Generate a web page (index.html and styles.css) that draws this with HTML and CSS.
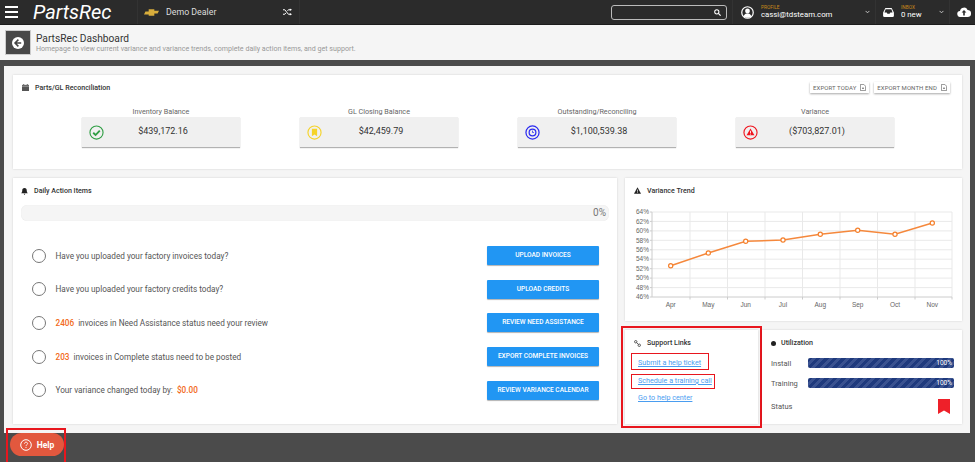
FILE: index.html
```html
<!DOCTYPE html>
<html lang="en">
<head>
  <meta charset="UTF-8">
  <meta name="viewport" content="width=device-width, initial-scale=1.0">
  <title>PartsRec Dashboard</title>
  <link rel="stylesheet" href="styles.css">
</head>
<body>

  <!-- Top bar -->
  <header class="topbar">
    <div class="burger"><span></span><span></span><span></span></div>
    <div class="logo">PartsRec</div>
    <div class="dealer">
      <svg class="bowtie" viewBox="0 0 16 7"><polygon points="5,0 11,0 11,1.5 16,1.5 14.5,4.5 11,4.5 11,7 5,7 5,5.5 0,5.5 1.5,2.5 5,2.5" fill="#d8ad3c"/></svg>
      <span class="dealer-name">Demo Dealer</span>
      <svg class="shuffle" viewBox="0 0 10 8"><path d="M0 1.5h2l4 5h2M0 6.5h2l1.2-1.5M5 2.7l1-1.2h2" fill="none" stroke="#fff" stroke-width="1.1"/><path d="M7.6 0l2.4 1.5-2.4 1.5zM7.6 5l2.4 1.5-2.4 1.5z" fill="#fff"/></svg>
    </div>
    <div class="search">
      <svg class="search-icon" viewBox="0 0 8 8"><circle cx="3.2" cy="3.2" r="2.4" fill="none" stroke="#fff" stroke-width="1.2"/><path d="M5 5l2.6 2.6" stroke="#fff" stroke-width="1.4"/></svg>
    </div>
    <div class="top-item profile">
      <svg class="top-icon" viewBox="0 0 14 14"><circle cx="7" cy="7" r="6.2" fill="none" stroke="#fff" stroke-width="1.3"/><circle cx="7" cy="5.4" r="2.6" fill="#fff"/><path d="M2.8 11.2c.8-2.4 2.4-3 4.2-3s3.4.6 4.2 3c-2.2 2-6.2 2-8.4 0z" fill="#fff"/></svg>
      <div class="top-text">
        <small>PROFILE</small>
        <span>cassi@tdsteam.com</span>
      </div>
      <svg class="chev" viewBox="0 0 6 4"><path d="M.7.7L3 3l2.3-2.3" fill="none" stroke="#ddd" stroke-width="1"/></svg>
    </div>
    <div class="top-item inbox">
      <svg class="top-icon inbox-icon" viewBox="0 0 12 10"><path d="M2.5 0h7L12 5v3.5A1.5 1.5 0 0 1 10.5 10h-9A1.5 1.5 0 0 1 0 8.5V5z" fill="#fff"/><path d="M2.8 1.3h6.4L10.5 5H8L7.2 6.5H4.8L4 5H1.5z" fill="#2b2b2b"/></svg>
      <div class="top-text">
        <small>INBOX</small>
        <span>0 new</span>
      </div>
      <svg class="chev" viewBox="0 0 6 4"><path d="M.7.7L3 3l2.3-2.3" fill="none" stroke="#ddd" stroke-width="1"/></svg>
    </div>
    <div class="upload">
      <svg viewBox="0 0 14 10"><path d="M3.5 10A3 3 0 0 1 3 4a4 4 0 0 1 7.6-1A3.5 3.5 0 0 1 10.5 10z" fill="#fff"/><path d="M7 3L4.6 5.6h1.6V8.500h1.600V5.600h1.600z" fill="#2b2b2b"/></svg>
    </div>
  </header>

  <!-- Page title -->
  <section class="pagehead">
    <div class="back">
      <svg viewBox="0 0 12 12"><circle cx="6" cy="6" r="6" fill="#fff"/><path d="M6.4 2.6L3 6l3.4 3.4M3.3 6h5.900" fill="none" stroke="#444" stroke-width="1.5"/></svg>
    </div>
    <div>
      <h1>PartsRec Dashboard</h1>
      <p>Homepage to view current variance and variance trends, complete daily action items, and get support.</p>
    </div>
  </section>

  <main class="panel">

    <!-- Reconciliation -->
    <section class="card recon">
      <div class="recon-head">
        <h2 class="card-title">
          <svg class="title-icon" viewBox="0 0 8 8"><path d="M0 1h8v7H0z" fill="#555"/><path d="M1.5 0h1v2h-1zM5.5 0h1v2h-1z" fill="#555"/><path d="M0 2.5h8" stroke="#fff" stroke-width=".5"/></svg>
          Parts/GL Reconciliation
        </h2>
        <div class="exports">
          <span class="export">EXPORT TODAY <svg viewBox="0 0 6 7"><path d="M.4.4h3.4l1.8 1.8v4.400H.4z" fill="none" stroke="#666" stroke-width=".7"/><path d="M3 3v2M2 4l1 1 1-1" fill="none" stroke="#666" stroke-width=".6"/></svg></span>
          <span class="export">EXPORT MONTH END <svg viewBox="0 0 6 7"><path d="M.4.4h3.4l1.8 1.8v4.400H.4z" fill="none" stroke="#666" stroke-width=".7"/><path d="M3 3v2M2 4l1 1 1-1" fill="none" stroke="#666" stroke-width=".6"/></svg></span>
        </div>
      </div>
      <div class="stats">
        <div class="stat">
          <div class="stat-label">Inventory Balance</div>
          <div class="stat-box">
            <svg class="stat-icon" viewBox="0 0 16 16"><circle cx="8" cy="8" r="7" fill="none" stroke="#2f9e44" stroke-width="1.2"/><path d="M4.5 8.3l2.5 2.4 4.5-4.700" fill="none" stroke="#2f9e44" stroke-width="2"/></svg>
            <span>$439,172.16</span>
          </div>
        </div>
        <div class="stat">
          <div class="stat-label">GL Closing Balance</div>
          <div class="stat-box">
            <svg class="stat-icon" viewBox="0 0 16 16"><circle cx="8" cy="8" r="7" fill="none" stroke="#f5d327" stroke-width="1.2"/><path d="M5.2 4h5.600v8L8 10l-2.800 2z" fill="#f5d327"/></svg>
            <span>$42,459.79</span>
          </div>
        </div>
        <div class="stat">
          <div class="stat-label">Outstanding/Reconciling</div>
          <div class="stat-box">
            <svg class="stat-icon" viewBox="0 0 16 16"><circle cx="8" cy="8" r="7" fill="none" stroke="#2a2af0" stroke-width="1.3"/><circle cx="8" cy="8" r="3.6" fill="none" stroke="#2a2af0" stroke-width="1.3"/><path d="M8 6v2h1.5" fill="none" stroke="#2a2af0" stroke-width=".8"/></svg>
            <span>$1,100,539.38</span>
          </div>
        </div>
        <div class="stat">
          <div class="stat-label">Variance</div>
          <div class="stat-box">
            <svg class="stat-icon" viewBox="0 0 16 16"><circle cx="8" cy="8" r="7" fill="none" stroke="#f0141e" stroke-width="1.2"/><path d="M8 3.600l4.200 7.400H3.800z" fill="#f0141e"/><path d="M8 6.200v2.600M8 9.400v.8" stroke="#fff" stroke-width=".9"/></svg>
            <span>($703,827.01)</span>
          </div>
        </div>
      </div>
    </section>

    <div class="lower">

      <!-- Daily actions -->
      <section class="card actions">
        <h2 class="card-title">
          <svg class="title-icon" viewBox="0 0 8 8"><path d="M4 0c1.800 0 2.600 1.300 2.600 3 0 1.500.6 2.200 1.200 3H.2c.6-.8 1.200-1.500 1.200-3C1.400 1.300 2.200 0 4 0z" fill="#222"/><path d="M3 6.700h2L4 8z" fill="#222"/></svg>
          Daily Action Items
        </h2>
        <div class="progress">0%</div>
        <ul class="todo">
          <li>
            <i class="check"></i>
            <span class="todo-text">Have you uploaded your factory invoices today?</span>
            <a class="btn">UPLOAD INVOICES</a>
          </li>
          <li>
            <i class="check"></i>
            <span class="todo-text">Have you uploaded your factory credits today?</span>
            <a class="btn">UPLOAD CREDITS</a>
          </li>
          <li>
            <i class="check"></i>
            <span class="todo-text"><b>2406</b>invoices in Need Assistance status need your review</span>
            <a class="btn">REVIEW NEED ASSISTANCE</a>
          </li>
          <li>
            <i class="check"></i>
            <span class="todo-text"><b>203</b>invoices in Complete status need to be posted</span>
            <a class="btn">EXPORT COMPLETE INVOICES</a>
          </li>
          <li>
            <i class="check"></i>
            <span class="todo-text">Your variance changed today by: <b class="amount">$0.00</b></span>
            <a class="btn">REVIEW VARIANCE CALENDAR</a>
          </li>
        </ul>
      </section>

      <div class="side">

        <!-- Trend chart -->
        <section class="card trend">
          <h2 class="card-title">
            <svg class="title-icon" viewBox="0 0 8 8"><path d="M4 .3L8 7.700H0z" fill="#222"/><path d="M4 3v2.400M4 6v.8" stroke="#fff" stroke-width=".8"/></svg>
            Variance Trend
          </h2>
          <svg class="chart" width="337" height="115" viewBox="0 0 337 115">
            <g class="grid">
              <path d="M27 7h300M27 16.400h300M27 25.900h300M27 35.300h300M27 44.800h300M27 54.200h300M27 63.700h300M27 73.100h300M27 82.600h300"/>
              <path d="M65 7v85M102.500 7v85M140 7v85M177.500 7v85M215 7v85M252.500 7v85M290 7v85M327 7v85"/>
            </g>
            <path class="axis" d="M27 7v85h300M25 7h2M25 16.400h2M25 25.900h2M25 35.300h2M25 44.800h2M25 54.200h2M25 63.700h2M25 73.100h2M25 82.600h2M25 92h2M65 92v2.500M102.500 92v2.500M140 92v2.500M177.500 92v2.500M215 92v2.500M252.500 92v2.500M290 92v2.500M327 92v2.500"/>
            <g class="ylabels">
              <text x="24" y="9.200">64%</text>
              <text x="24" y="18.500">62%</text>
              <text x="24" y="27.800">60%</text>
              <text x="24" y="37.500">58%</text>
              <text x="24" y="46.800">56%</text>
              <text x="24" y="56.200">54%</text>
              <text x="24" y="65.800">52%</text>
              <text x="24" y="75.200">50%</text>
              <text x="24" y="84.500">48%</text>
              <text x="24" y="94.200">46%</text>
            </g>
            <g class="xlabels">
              <text x="45.700" y="102">Apr</text>
              <text x="83.300" y="102">May</text>
              <text x="120.700" y="102">Jun</text>
              <text x="158" y="102">Jul</text>
              <text x="195.300" y="102">Aug</text>
              <text x="232.700" y="102">Sep</text>
              <text x="270" y="102">Oct</text>
              <text x="307.300" y="102">Nov</text>
            </g>
            <polyline class="line" points="45.700,60.700 83.300,48 120.700,36.300 158,35 195.300,29.300 232.700,25.300 270,29.300 307.300,18"/>
            <g class="dots">
              <circle cx="45.700" cy="60.700" r="2.100"/>
              <circle cx="83.300" cy="48" r="2.100"/>
              <circle cx="120.700" cy="36.300" r="2.100"/>
              <circle cx="158" cy="35" r="2.100"/>
              <circle cx="195.300" cy="29.300" r="2.100"/>
              <circle cx="232.700" cy="25.300" r="2.100"/>
              <circle cx="270" cy="29.300" r="2.100"/>
              <circle cx="307.300" cy="18" r="2.100"/>
            </g>
          </svg>
        </section>

        <div class="side-bottom">
          <!-- Support -->
          <section class="card support">
            <h2 class="card-title">
              <svg class="title-icon" viewBox="0 0 8 8"><circle cx="2" cy="2" r="1.400" fill="none" stroke="#333" stroke-width=".9"/><circle cx="6" cy="6" r="1.400" fill="none" stroke="#333" stroke-width=".9"/><path d="M3 3l2 2" stroke="#333" stroke-width=".9"/></svg>
              Support Links
            </h2>
            <a class="link boxed ticket">Submit a help ticket</a>
            <a class="link boxed training">Schedule a training call</a>
            <a class="link center">Go to help center</a>
          </section>

          <!-- Utilization -->
          <section class="card util">
            <h2 class="card-title"><i class="dot"></i>Utilization</h2>
            <div class="util-row">
              <span>Install</span>
              <div class="bar">100%</div>
            </div>
            <div class="util-row">
              <span>Training</span>
              <div class="bar">100%</div>
            </div>
            <div class="util-row status">
              <span>Status</span>
              <svg class="flag" viewBox="0 0 12 15"><path d="M0 0h12v15L6 11.500 0 15z" fill="#ee2029"/></svg>
            </div>
          </section>
        </div>
      </div>
    </div>
  </main>

  <!-- Floating help button -->
  <div class="help-wrap">
    <a class="help">
      <svg viewBox="0 0 12 12"><circle cx="6" cy="6" r="5.300" fill="none" stroke="#fff" stroke-width="1"/><path d="M4.400 4.700C4.500 3.700 5.200 3.200 6 3.200c1 0 1.600.6 1.600 1.400 0 1.200-1.600 1.200-1.600 2.300" fill="none" stroke="#fff" stroke-width=".9"/><path d="M6 7.900v1" stroke="#fff" stroke-width="1"/></svg>
      Help
    </a>
  </div>

</body>
</html>
```

FILE: styles.css
```css
/* Global */
* {
  box-sizing: border-box;
}

body {
  margin: 0;
  width: 975px;
  height: 462px;
  overflow: hidden;
  position: relative;
  background-color: #4b4b4b;
  font-family: Roboto, Arial, sans-serif;
  color: #444;
}

h1, h2, p, ul {
  margin: 0;
  padding: 0;
}

/* Top bar */
.topbar {
  height: 25px;
  background-color: #2b2b2b;
  border-bottom: 1px solid #1c1c1c;
  display: flex;
  align-items: center;
  color: white;
}

.burger {
  width: 13px;
  margin-left: 5px;
  display: flex;
  flex-direction: column;
  gap: 3px;
}

.burger span {
  height: 2px;
  background: white;
}

.logo {
  margin-left: 15px;
  width: 104px;
  font-size: 20px;
  font-style: italic;
  font-weight: 400;
  line-height: 24px;
}

.dealer {
  width: 163px;
  height: 24px;
  padding: 0 7px 0 6px;
  border-left: 1px solid #333;
  border-right: 1px solid #333;
  display: flex;
  align-items: center;
}

.bowtie {
  width: 15px;
  height: 7px;
}

.dealer-name {
  margin-left: 7px;
  font-size: 8.8px;
  color: #ddd;
  flex: 1;
}

.shuffle {
  width: 9px;
  height: 8px;
}

.search {
  margin-left: 311px;
  width: 116px;
  height: 15px;
  border: 1px solid #bbb;
  border-radius: 3px;
  display: flex;
  align-items: center;
  justify-content: flex-end;
  padding-right: 5px;
}

.search-icon {
  width: 7px;
  height: 7px;
}

.top-item {
  height: 24px;
  margin-left: 5px;
  border-left: 1px solid #333;
  display: flex;
  align-items: center;
}

.profile {
  width: 143px;
  padding: 0 5px 0 8px;
}

.inbox {
  margin-left: 0;
  width: 74px;
  padding: 0 5px 0 7px;
}

.top-icon {
  width: 13px;
  height: 13px;
  flex: none;
}

.inbox-icon {
  width: 11px;
  height: 9px;
}

.top-text {
  margin-left: 7px;
  flex: 1;
  line-height: 8px;
  font-size: 7.8px;
}

.top-text small {
  display: block;
  font-size: 4.8px;
  line-height: 6px;
  color: #c98a1a;
}

.chev {
  width: 5px;
  height: 4px;
}

.upload {
  width: 26px;
  height: 24px;
  border-left: 1px solid #333;
  padding-left: 7px;
  display: flex;
  align-items: center;
}

.upload svg {
  width: 14px;
  height: 10px;
}

/* Page title */
.pagehead {
  height: 35px;
  background-color: #f5f5f5;
  display: flex;
  align-items: center;
  padding-left: 5px;
  gap: 5px;
}

.back {
  width: 26px;
  height: 25px;
  background-color: #484848;
  border: 1px solid #ccc;
  display: flex;
  align-items: center;
  justify-content: center;
}

.back svg {
  width: 12px;
  height: 12px;
}

.pagehead h1 {
  font-size: 10.2px;
  font-weight: 400;
  line-height: 11px;
  color: #333;
}

.pagehead p {
  font-size: 7.1px;
  line-height: 9px;
  color: #999;
}

/* Panel */
.panel {
  margin: 6px 5px 0 4px;
  height: 367px;
  background-color: #f5f5f5;
  padding: 9px 8px 0 9px;
  display: flex;
  flex-direction: column;
  gap: 9px;
}

.card {
  background: white;
  box-shadow: 0 0 2px rgba(0, 0, 0, 0.15);
}

.card-title {
  display: flex;
  align-items: center;
  font-size: 7.1px;
  font-weight: 500;
  color: #333;
  line-height: 10px;
}

.title-icon {
  width: 7px;
  height: 7px;
  margin-right: 6px;
}

/* Reconciliation */
.recon {
  height: 94px;
  padding: 7px 12px 0 9px;
}

.recon-head {
  display: flex;
  justify-content: space-between;
  align-items: center;
  height: 11px;
}

.exports {
  display: flex;
  gap: 5px;
}

.export {
  height: 11px;
  padding: 0 3px;
  display: flex;
  align-items: center;
  gap: 4px;
  font-size: 6px;
  letter-spacing: 0.1px;
  color: #666;
  background: white;
  box-shadow: 0 1px 2px rgba(0, 0, 0, 0.35);
}

.export svg {
  width: 6px;
  height: 7px;
}

.stats {
  margin: 13px 0 0 60px;
  display: grid;
  grid-template-columns: repeat(4, 158px);
  gap: 60px;
}

.stat-label {
  text-align: center;
  font-size: 7.2px;
  line-height: 11px;
  color: #666;
}

.stat-box {
  height: 30px;
  background-color: #f0f0f0;
  box-shadow: 0 1px 1px rgba(0, 0, 0, 0.3);
  position: relative;
  display: flex;
  align-items: center;
  justify-content: center;
  font-size: 9px;
  color: #333;
}

.stat-box span {
  margin-left: 4px;
  margin-bottom: 2px;
}

.stat-icon {
  position: absolute;
  left: 7px;
  top: 8px;
  width: 15px;
  height: 15px;
}

/* Lower section */
.lower {
  display: flex;
  gap: 8px;
}

.actions {
  width: 604px;
  height: 246px;
  padding: 8px 8px 0 8px;
}

.progress {
  margin-top: 9px;
  height: 16px;
  border-radius: 6px;
  background-color: #f5f5f5;
  box-shadow: inset 0 0 1px rgba(0, 0, 0, 0.1);
  text-align: right;
  padding-right: 3px;
  font-size: 10px;
  line-height: 15px;
  color: #777;
}

.todo {
  list-style: none;
  margin-top: 25px;
  padding-left: 10.5px;
  display: flex;
  flex-direction: column;
  gap: 14.7px;
}

.todo li {
  height: 19px;
  display: flex;
  align-items: center;
}

.check {
  width: 14px;
  height: 14px;
  border: 1px solid #777;
  border-radius: 50%;
  flex: none;
}

.todo-text {
  margin-left: 10px;
  flex: 1;
  font-size: 8.2px;
  color: #555;
}

.todo-text b {
  margin-right: 4px;
  font-weight: 500;
  color: #f26a21;
}

.todo-text .amount {
  margin-left: 2px;
  margin-right: 0;
}

.btn {
  width: 112px;
  height: 19px;
  margin-right: 10px;
  background-color: #2196f3;
  box-shadow: 0 1px 1px rgba(0, 0, 0, 0.3);
  border-radius: 1px;
  color: white;
  font-size: 6.55px;
  font-weight: 500;
  text-align: center;
  line-height: 19px;
}

.side {
  width: 337px;
  display: flex;
  flex-direction: column;
  gap: 9px;
}

/* Trend */
.trend {
  height: 143px;
}

.trend .card-title {
  padding: 7px 0 0 9px;
  height: 18px;
}

.chart {
  display: block;
  margin-top: 9px;
}

.grid path {
  stroke: #e9e9e9;
  stroke-width: 1;
  fill: none;
}

.axis {
  stroke: #ccc;
  stroke-width: 1;
  fill: none;
}

.ylabels text {
  font-family: "Liberation Sans", Arial, sans-serif;
  font-size: 6.5px;
  fill: #666;
  text-anchor: end;
}

.xlabels text {
  font-family: "Liberation Sans", Arial, sans-serif;
  font-size: 6.5px;
  fill: #666;
  text-anchor: middle;
}

.line {
  fill: none;
  stroke: #f5883c;
  stroke-width: 1.5;
}

.dots circle {
  fill: white;
  stroke: #f5802c;
  stroke-width: 1.2;
}

/* Support and utilization */
.side-bottom {
  display: flex;
  gap: 4px;
}

.support {
  width: 133px;
  height: 94px;
  padding: 8px 0 0 9px;
  outline: 2px solid #e8161e;
  outline-offset: 2px;
}

.link {
  display: block;
  width: fit-content;
  font-size: 7.2px;
  line-height: 10px;
  color: #4a9df0;
  text-decoration: underline;
}

.boxed {
  margin-left: -3px;
  padding-left: 7px;
  padding-right: 3px;
  outline: 1.5px solid #e8161e;
  outline-offset: -1px;
}

.ticket {
  margin-top: 5px;
  padding-top: 5px;
  padding-bottom: 2px;
  padding-right: 8px;
}

.training {
  margin-top: 4px;
  padding-top: 2px;
  padding-bottom: 3px;
}

.center {
  margin: 4px 0 0 4px;
}

.util {
  flex: 1;
  height: 94px;
  padding: 8px 8px 0 9px;
}

.dot {
  width: 5px;
  height: 5px;
  border-radius: 50%;
  background: #222;
  margin: 0 5px 0 0;
}

.util-row {
  margin-top: 10px;
  display: flex;
  align-items: center;
  justify-content: space-between;
  font-size: 7.5px;
  color: #555;
}

.card-title + .util-row {
  margin-top: 10px;
}

.bar {
  width: 146px;
  height: 10px;
  border-radius: 2px;
  background-color: #1f3a7d;
  background-image: repeating-linear-gradient(135deg, #1f3a7d 0 3px, #3a5290 3px 6px);
  color: white;
  font-size: 6.5px;
  line-height: 10px;
  text-align: right;
  padding-right: 2px;
}

.status {
  margin-top: 11px;
}

.flag {
  width: 12px;
  height: 15px;
  margin-right: 4px;
}

/* Help */
.help-wrap {
  position: absolute;
  left: 6px;
  top: 428px;
  width: 60px;
  height: 34px;
  border: 2px solid #e8161e;
  border-bottom: 0;
}

.help {
  position: absolute;
  left: 2px;
  top: 3px;
  width: 54px;
  height: 23px;
  background-color: #e2583e;
  border-radius: 12px;
  color: white;
  font-size: 8.5px;
  font-weight: 700;
  display: flex;
  align-items: center;
  justify-content: center;
  gap: 5px;
}

.help svg {
  width: 12px;
  height: 12px;
}
```
